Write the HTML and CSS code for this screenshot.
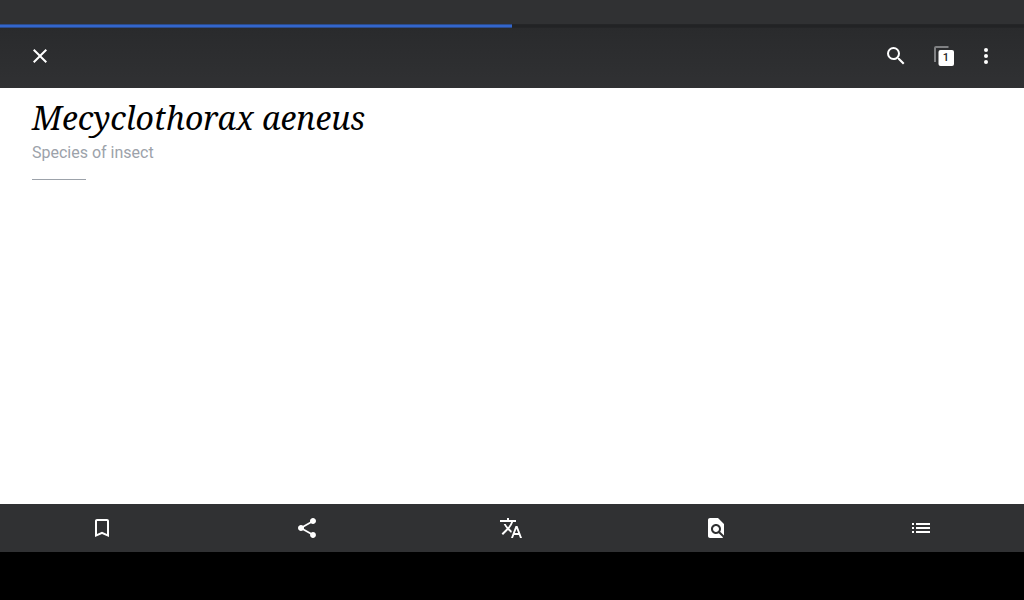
FILE: index.html
```html
<!DOCTYPE html>
<html lang="en">
<head>
<meta charset="utf-8">
<meta name="viewport" content="width=device-width, initial-scale=1">
<title>Mecyclothorax aeneus</title>
<link rel="stylesheet" href="styles.css">
</head>
<body>
<div class="status-bar"></div>
<header class="toolbar">
  <progress class="load-progress" value="50" max="100" aria-label="Page loading"></progress>
  <div class="toolbar-row">
    <button class="icon-button" type="button" aria-label="Close">
      <svg class="icon" viewBox="0 0 24 24"><path d="M19 6.41 17.59 5 12 10.59 6.41 5 5 6.41 10.59 12 5 17.59 6.41 19 12 13.41 17.59 19 19 17.59 13.41 12z"/></svg>
    </button>
    <div class="toolbar-actions">
      <button class="icon-button" type="button" aria-label="Search">
        <svg class="icon" viewBox="0 0 24 24"><path d="M15.5 14h-.79l-.28-.27A6.471 6.471 0 0 0 16 9.5 6.5 6.5 0 1 0 9.5 16c1.61 0 3.09-.59 4.23-1.57l.27.28v.79l5 4.99L20.49 19l-4.99-5zm-6 0C7.01 14 5 11.99 5 9.5S7.01 5 9.5 5 14 7.01 14 9.5 11.99 14 9.5 14z"/></svg>
      </button>
      <button class="icon-button tabs-button" type="button" aria-label="Tabs: 1">
        <svg class="icon" viewBox="0 0 24 24"><path class="tab-back" d="M4 2h12.500v2H4v14H2V4a2 2 0 0 1 2-2z"/><rect x="6.500" y="6" width="15.500" height="16" rx="2"/></svg>
        <span class="tab-count">1</span>
      </button>
      <button class="icon-button menu-button" type="button" aria-label="More options">
        <svg class="icon" viewBox="0 0 24 24"><circle cx="12" cy="6" r="2"/><circle cx="12" cy="12" r="2"/><circle cx="12" cy="18" r="2"/></svg>
      </button>
    </div>
  </div>
</header>
<main class="article">
  <h1 class="title">Mecyclothorax aeneus</h1>
  <p class="description">Species of insect</p>
  <hr class="divider">
</main>
<nav class="action-bar" aria-label="Article actions">
  <button class="action" type="button" aria-label="Save">
    <svg class="icon" viewBox="0 0 24 24"><path d="M17 3H7c-1.100 0-2 .9-2 2v16l7-3 7 3V5c0-1.100-.9-2-2-2zm0 15-5-2.180L7 18V5h10v13z"/></svg>
  </button>
  <button class="action" type="button" aria-label="Share">
    <svg class="icon" viewBox="0 0 24 24"><path d="M18 16.080c-.76 0-1.440.3-1.960.77L8.910 12.700c.05-.23.09-.46.09-.7s-.04-.47-.09-.7l7.050-4.110c.54.5 1.250.81 2.040.81 1.660 0 3-1.340 3-3s-1.340-3-3-3-3 1.340-3 3c0 .24.04.47.09.7L8.040 9.810C7.500 9.310 6.790 9 6 9c-1.660 0-3 1.340-3 3s1.340 3 3 3c.79 0 1.500-.31 2.040-.81l7.120 4.160c-.05.21-.08.43-.08.65 0 1.610 1.310 2.920 2.920 2.920s2.920-1.310 2.920-2.920-1.310-2.920-2.920-2.920z"/></svg>
  </button>
  <button class="action" type="button" aria-label="Language">
    <svg class="icon" viewBox="0 0 24 24"><path d="m12.870 15.070-2.540-2.510.03-.03A17.520 17.520 0 0 0 14.070 6H17V4h-7V2H8v2H1v1.990h11.170C11.500 7.920 10.440 9.750 9 11.350 8.070 10.320 7.300 9.190 6.690 8h-2c.73 1.630 1.730 3.170 2.980 4.560l-5.090 5.020L4 19l5-5 3.110 3.110.76-2.040zM18.500 10h-2L12 22h2l1.120-3h4.750L21 22h2l-4.500-12zm-2.620 7 1.620-4.330L19.120 17h-3.240z"/></svg>
  </button>
  <button class="action" type="button" aria-label="Find in page">
    <svg class="icon" viewBox="0 0 24 24"><path d="M20 19.590V8l-6-6H6c-1.100 0-1.990.9-1.990 2L4 20c0 1.100.89 2 1.990 2H18c.45 0 .85-.15 1.190-.4l-4.430-4.430c-.8.52-1.740.83-2.760.83-2.760 0-5-2.240-5-5s2.240-5 5-5 5 2.240 5 5c0 1.020-.31 1.960-.83 2.750L20 19.590zM9 13c0 1.660 1.340 3 3 3s3-1.340 3-3-1.340-3-3-3-3 1.340-3 3z"/></svg>
  </button>
  <button class="action" type="button" aria-label="Contents">
    <svg class="icon" viewBox="0 0 24 24"><path d="M3 13h2v-2H3v2zm0 4h2v-2H3v2zm0-8h2V7H3v2zm4 4h14v-2H7v2zm0 4h14v-2H7v2zM7 7v2h14V7H7z"/></svg>
  </button>
</nav>
<div class="system-bar"></div>
</body>
</html>
```

FILE: styles.css
```css
* {
  box-sizing: border-box;
}

body {
  margin: 0;
  min-height: 100vh;
  display: flex;
  flex-direction: column;
  background: #fff;
  font-family: Roboto, sans-serif;
}

.status-bar {
  height: 24px;
  background: #303133;
}

.toolbar {
  display: flex;
  flex-direction: column;
  background: linear-gradient(#292a2c, #303133);
}

.load-progress {
  appearance: none;
  display: block;
  width: 100%;
  height: 4px;
  border: 0;
  border-top: 1px solid #2a4275;
  border-bottom: 1px solid #2a4275;
  border-image: linear-gradient(90deg, #2c4c8c 50%, #242527 50%) 1;
  background: #222325;
}

.load-progress::-webkit-progress-bar {
  background: #222325;
}

.load-progress::-webkit-progress-value {
  background: #3366cc;
}

.toolbar-row {
  display: flex;
  align-items: center;
  justify-content: space-between;
  padding: 4px 20px 8px 16px;
}

.toolbar-actions {
  display: flex;
  align-items: center;
}

.icon-button,
.action {
  display: flex;
  align-items: center;
  justify-content: center;
  height: 48px;
  padding: 0;
  border: 0;
  background: none;
  color: #fff;
  cursor: pointer;
}

.icon-button {
  width: 48px;
}

.tabs-button {
  position: relative;
}

.menu-button {
  width: 36px;
}

.icon {
  display: block;
  width: 24px;
  height: 24px;
  fill: currentColor;
}

.tab-back {
  fill: #808183;
}

.tab-count {
  position: absolute;
  top: 18px;
  left: 18px;
  width: 16px;
  color: #202122;
  font: 500 11px/16px Roboto, sans-serif;
  text-align: center;
}

.article {
  flex: 1;
  padding: 8px 32px;
}

.title {
  margin: 0 0 2px;
  color: #000;
  font: italic 400 32px/44px "Noto Serif", "Droid Serif", "Liberation Serif", serif;
}

.description {
  margin: 0;
  color: #9ca2aa;
  font-size: 16px;
  line-height: 22px;
}

.divider {
  width: 54px;
  height: 1px;
  margin: 15px 0 0;
  border: 0;
  background: #9ca2aa;
}

.action-bar {
  display: grid;
  grid-template-columns: repeat(5, 1fr);
  padding-right: 1px;
  background: #303133;
}

.system-bar {
  height: 48px;
  background: #000;
}
```
